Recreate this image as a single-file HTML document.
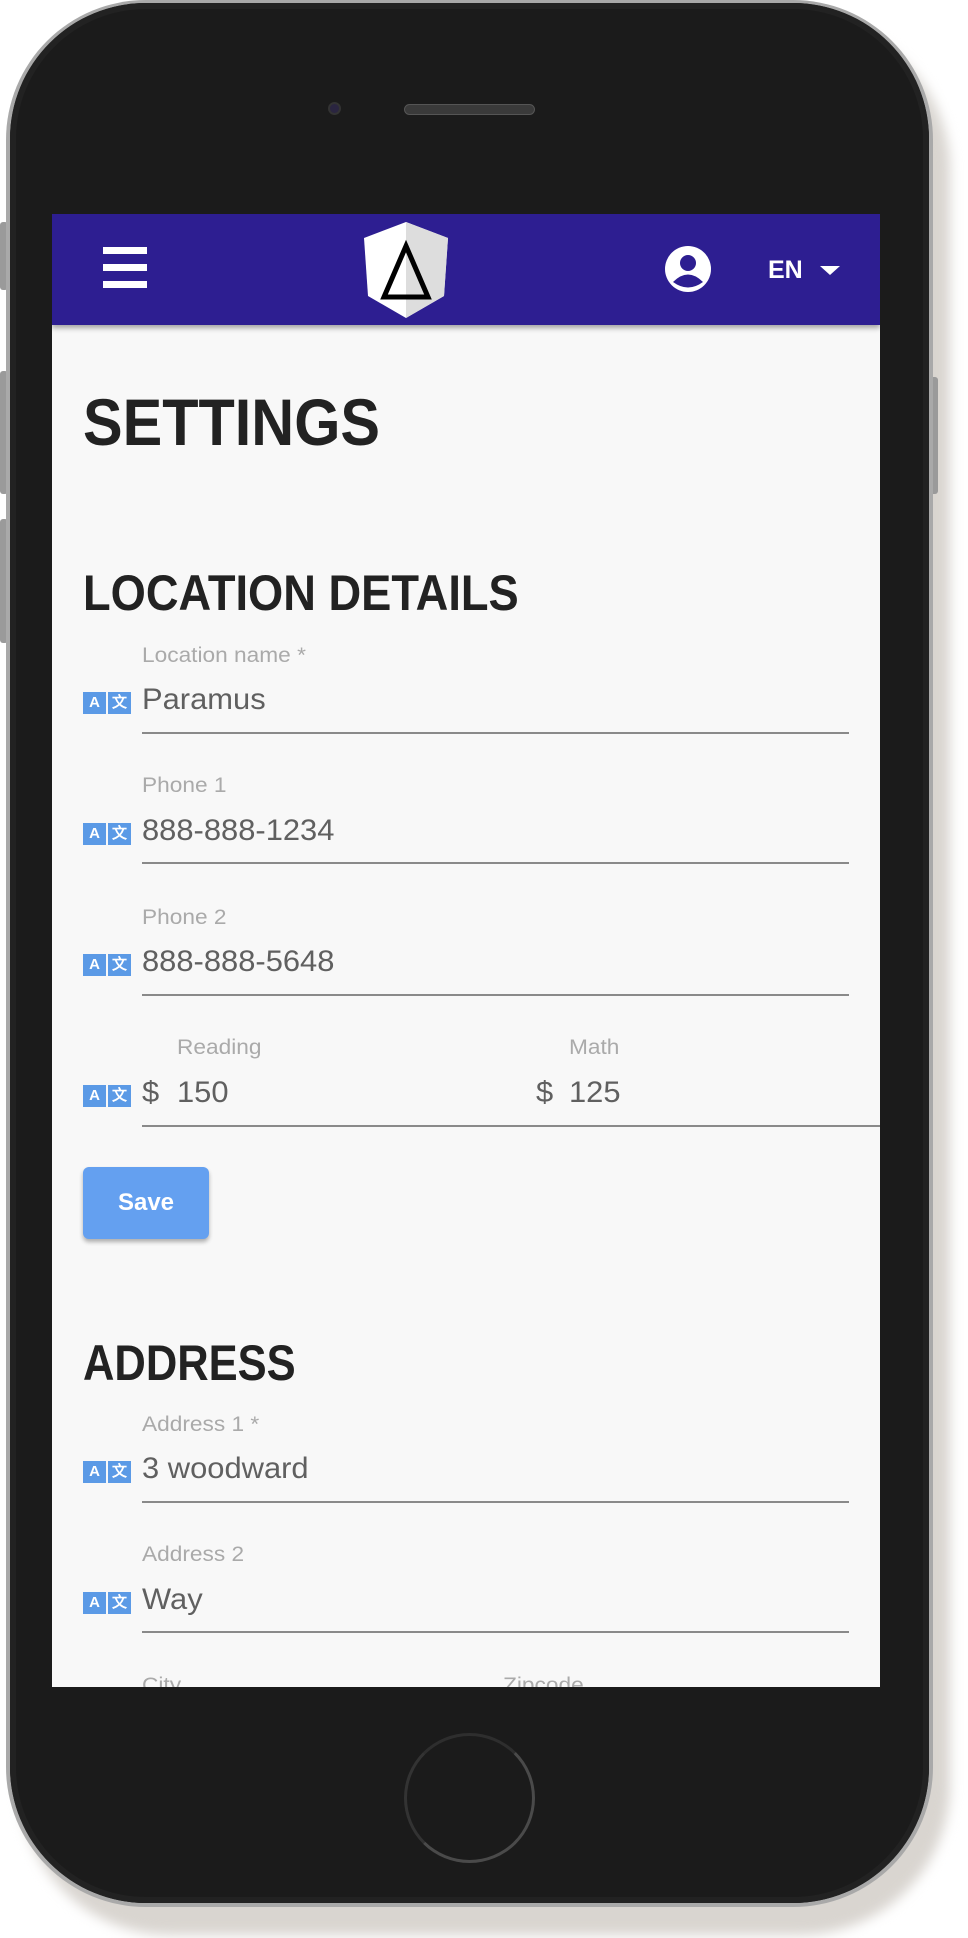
<!DOCTYPE html>
<html><head><meta charset="utf-8"><style>
*{margin:0;padding:0;box-sizing:border-box}
html,body{width:968px;height:1938px;background:#fff;overflow:hidden;position:relative;font-family:"Liberation Sans",sans-serif}
.abs{position:absolute}
.shadow{left:20px;top:20px;width:930px;height:1915px;border-radius:150px;background:#d9d5d0;filter:blur(6px)}
.outer{left:6px;top:0;width:927px;height:1907px;border-radius:140px;background:#a9a9a9}
.body{left:10px;top:3px;width:919px;height:1900px;border-radius:136px;background:#1b1b1b;box-shadow:inset 0 0 0 6px #222}
.btn{background:#9a9a9a;border-radius:3px}
.screen{left:52px;top:214px;width:828px;height:1473px;background:#f8f8f8;overflow:hidden}
.hdr{left:0;top:0;width:828px;height:111px;background:#2d1e91;box-shadow:0 3px 5px rgba(0,0,0,.35)}
.h1{font-weight:bold;color:#222;transform-origin:left top;white-space:nowrap}
.lbl{font-size:21px;color:#aaa;transform:scaleX(1.08);transform-origin:left top;white-space:nowrap}
.val{font-size:30px;color:#606060;transform:scaleX(1.03);transform-origin:left top;white-space:nowrap}
.line{height:2px;background:#8a8a8a}
.tr{width:48px;height:22px}
.tr span{position:absolute;top:0;width:23px;height:22px;background:#5b9ae6;color:#fff;font-size:15px;font-weight:bold;text-align:center;line-height:22px}
</style></head><body>
<div class="abs shadow"></div>
<div class="abs btn" style="left:0;top:222px;width:8px;height:68px"></div>
<div class="abs btn" style="left:0;top:371px;width:8px;height:123px"></div>
<div class="abs btn" style="left:0;top:519px;width:8px;height:124px"></div>
<div class="abs btn" style="left:930px;top:377px;width:8px;height:117px"></div>
<div class="abs outer"></div>
<div class="abs body"></div>
<div class="abs" style="left:328px;top:102px;width:13px;height:13px;border-radius:50%;background:#2a2540;border:2px solid #333"></div>
<div class="abs" style="left:404px;top:104px;width:131px;height:11px;border-radius:6px;background:#3a3a3a;border:1px solid #555"></div>
<div class="abs" style="left:404px;top:1733px;width:131px;height:130px;border-radius:50%;border:3px solid #4a4a4a;border-top-color:#2e2e2e;border-left-color:#333"></div>

<div class="abs screen">
 <div class="abs hdr">
  <div class="abs" style="left:51px;top:33px;width:44px;height:7px;background:#fff"></div>
  <div class="abs" style="left:51px;top:50px;width:44px;height:7px;background:#fff"></div>
  <div class="abs" style="left:51px;top:67px;width:44px;height:7px;background:#fff"></div>
  <svg class="abs" style="left:310px;top:8px" width="88" height="96" viewBox="0 0 88 96">
   <polygon points="44,0 86,16 82,74 44,96 6,74 2,16" fill="#fff"/>
   <polygon points="44,0 86,16 82,74 44,96" fill="#ddd"/>
   <polygon points="44,24 66,75 22,75" fill="none" stroke="#000" stroke-width="5"/>
  </svg>
  <svg class="abs" style="left:612px;top:31px" width="48" height="48" viewBox="0 0 48 48">
   <circle cx="24" cy="24" r="23" fill="#fff"/>
   <circle cx="24" cy="18" r="8" fill="#2d1e91"/>
   <path d="M9 37 Q24 22 39 37 Q24 48 9 37Z" fill="#2d1e91"/>
  </svg>
  <div class="abs" style="left:716px;top:42px;color:#fff;font-weight:bold;font-size:25px">EN</div>
  <div class="abs" style="left:768px;top:52px;width:0;height:0;border-left:10px solid transparent;border-right:10px solid transparent;border-top:9px solid #fff"></div>
 </div>

 <div class="abs h1" style="left:31px;top:170px;font-size:66px;transform:scaleX(.9)">SETTINGS</div>
 <div class="abs h1" style="left:31px;top:350px;font-size:50px;transform:scaleX(.905)">LOCATION DETAILS</div>

 <div class="abs lbl" style="left:90px;top:430px">Location name *</div>
 <div class="abs tr" style="left:31px;top:478px"><span style="left:0">A</span><span style="left:25px">文</span></div>
 <div class="abs val" style="left:90px;top:469px">Paramus</div>
 <div class="abs line" style="left:90px;top:518px;width:707px"></div>

 <div class="abs lbl" style="left:90px;top:560px">Phone 1</div>
 <div class="abs tr" style="left:31px;top:609px"><span style="left:0">A</span><span style="left:25px">文</span></div>
 <div class="abs val" style="left:90px;top:600px">888-888-1234</div>
 <div class="abs line" style="left:90px;top:648px;width:707px"></div>

 <div class="abs lbl" style="left:90px;top:692px">Phone 2</div>
 <div class="abs tr" style="left:31px;top:740px"><span style="left:0">A</span><span style="left:25px">文</span></div>
 <div class="abs val" style="left:90px;top:731px">888-888-5648</div>
 <div class="abs line" style="left:90px;top:780px;width:707px"></div>

 <div class="abs lbl" style="left:125px;top:822px">Reading</div>
 <div class="abs lbl" style="left:517px;top:822px">Math</div>
 <div class="abs tr" style="left:31px;top:871px"><span style="left:0">A</span><span style="left:25px">文</span></div>
 <div class="abs val" style="left:90px;top:862px">$</div>
 <div class="abs val" style="left:125px;top:862px">150</div>
 <div class="abs val" style="left:484px;top:862px">$</div>
 <div class="abs val" style="left:517px;top:862px">125</div>
 <div class="abs line" style="left:90px;top:911px;width:740px"></div>

 <div class="abs" style="left:31px;top:953px;width:126px;height:72px;border-radius:6px;background:#64a0f0;box-shadow:0 3px 4px rgba(0,0,0,.3);color:#fff;font-weight:bold;font-size:24px;text-align:center;line-height:72px">Save</div>

 <div class="abs h1" style="left:31px;top:1120px;font-size:50px;transform:scaleX(.87)">ADDRESS</div>

 <div class="abs lbl" style="left:90px;top:1199px">Address 1 *</div>
 <div class="abs tr" style="left:31px;top:1247px"><span style="left:0">A</span><span style="left:25px">文</span></div>
 <div class="abs val" style="left:90px;top:1238px">3 woodward</div>
 <div class="abs line" style="left:90px;top:1287px;width:707px"></div>

 <div class="abs lbl" style="left:90px;top:1329px">Address 2</div>
 <div class="abs tr" style="left:31px;top:1378px"><span style="left:0">A</span><span style="left:25px">文</span></div>
 <div class="abs val" style="left:90px;top:1369px">Way</div>
 <div class="abs line" style="left:90px;top:1417px;width:707px"></div>

 <div class="abs lbl" style="left:90px;top:1460px">City</div>
 <div class="abs lbl" style="left:451px;top:1460px">Zipcode</div>
</div>
</body></html>
